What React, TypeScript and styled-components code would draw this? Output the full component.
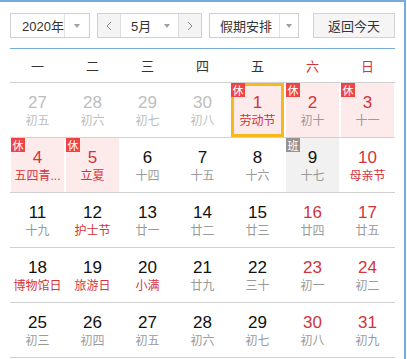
import React from "react";
import styled, { createGlobalStyle } from "styled-components";

const GlobalStyle = createGlobalStyle`
    html, body {
        margin: 0;
        padding: 0;
        background: #fff;
    }
    body {
        font-family: "Liberation Sans", "Noto Sans CJK SC", sans-serif;
    }
`;

interface DayInfo {
    day: number;
    lunar: string;
    faded?: boolean;
    red?: boolean;
    festival?: boolean;
    mark?: "rest" | "work";
    selected?: boolean;
}

const days: DayInfo[] = [
    { day: 27, lunar: "初五", faded: true },
    { day: 28, lunar: "初六", faded: true },
    { day: 29, lunar: "初七", faded: true },
    { day: 30, lunar: "初八", faded: true },
    { day: 1, lunar: "劳动节", red: true, festival: true, mark: "rest", selected: true },
    { day: 2, lunar: "初十", red: true, mark: "rest" },
    { day: 3, lunar: "十一", red: true, mark: "rest" },

    // 五四青年节 is shown shortened, as the widget does
    { day: 4, lunar: "五四青...", red: true, festival: true, mark: "rest" },
    { day: 5, lunar: "立夏", red: true, festival: true, mark: "rest" },
    { day: 6, lunar: "十四" },
    { day: 7, lunar: "十五" },
    { day: 8, lunar: "十六" },
    { day: 9, lunar: "十七", mark: "work" },
    { day: 10, lunar: "母亲节", red: true, festival: true },

    { day: 11, lunar: "十九" },
    { day: 12, lunar: "护士节", festival: true },
    { day: 13, lunar: "廿一" },
    { day: 14, lunar: "廿二" },
    { day: 15, lunar: "廿三" },
    { day: 16, lunar: "廿四", red: true },
    { day: 17, lunar: "廿五", red: true },

    { day: 18, lunar: "博物馆日", festival: true },
    { day: 19, lunar: "旅游日", festival: true },
    { day: 20, lunar: "小满", festival: true },
    { day: 21, lunar: "廿九" },
    { day: 22, lunar: "三十" },
    { day: 23, lunar: "初一", red: true },
    { day: 24, lunar: "初二", red: true },

    { day: 25, lunar: "初三" },
    { day: 26, lunar: "初四" },
    { day: 27, lunar: "初五" },
    { day: 28, lunar: "初六" },
    { day: 29, lunar: "初七" },
    { day: 30, lunar: "初八", red: true },
    { day: 31, lunar: "初九", red: true },
];

const weekdays = ["一", "二", "三", "四", "五", "六", "日"];

const RED = "#d2343c";
const BLUE = "#78abdc";

// 外框
const Frame = styled.div`
    box-sizing: border-box;
    width: 406px;
    height: 359px;
    border-top: 2px solid ${BLUE};
    border-right: 2px solid ${BLUE};
    padding: 11px 9px 0 10px;
    overflow: hidden;
`;

const Toolbar = styled.div`
    display: flex;
    align-items: center;
    height: 25px;
    padding-bottom: 10px;
    border-bottom: 1px solid ${BLUE};
`;

const Select = styled.div<{ $width: number; $gap?: number }>`
    box-sizing: border-box;
    display: flex;
    width: ${({ $width }) => $width}px;
    height: 25px;
    margin-right: ${({ $gap }) => $gap ?? 7}px;
    border: 1px solid #cfcfcf;
    background: #fff;
`;

const SelectText = styled.span<{ $pad?: number }>`
    flex: 1;
    display: flex;
    align-items: center;
    padding-left: ${({ $pad }) => $pad ?? 11}px;
    font-size: 13px;
    color: #333;
`;

const ArrowBox = styled.span<{ $divided?: boolean; $width?: number }>`
    width: ${({ $width }) => $width ?? 24}px;
    display: flex;
    align-items: center;
    justify-content: center;
    border-left: ${({ $divided }) => ($divided ? "1px solid #e2e2e2" : "none")};

    &::after {
        content: "";
        border-left: 3px solid transparent;
        border-right: 3px solid transparent;
        border-top: 4px solid #a0a0a0;
    }
`;

const StepButton = styled.span<{ $side: "left" | "right" }>`
    width: 22px;
    display: flex;
    align-items: center;
    justify-content: center;
    background: #f4f4f4;
    ${({ $side }) => ($side === "left" ? "border-right" : "border-left")}: 1px solid #dcdcdc;
`;

const TodayButton = styled.button`
    box-sizing: border-box;
    width: 82px;
    height: 25px;
    margin-left: auto;
    border: 1px solid #d2d2d2;
    background: #f5f5f5;
    font-family: "Liberation Sans", "Noto Sans CJK SC", sans-serif;
    font-size: 13px;
    color: #333;
    padding: 0;
`;

const Week = styled.div`
    display: grid;
    grid-template-columns: repeat(7, 55px);
    height: 33px;
    border-bottom: 1px solid #d0d0d0;
`;

const WeekName = styled.span<{ $weekend?: boolean }>`
    display: flex;
    align-items: center;
    justify-content: center;
    font-family: "Noto Sans CJK SC", sans-serif;
    font-size: 13px;
    color: ${({ $weekend }) => ($weekend ? RED : "#333")};
`;

const Row = styled.div`
    display: grid;
    grid-template-columns: repeat(7, 55px);
    height: 54px;
    border-bottom: 1px solid #d0d0d0;
`;

const Cell = styled.div<{ $bg: string; $selected?: boolean }>`
    position: relative;
    margin: 0 1px;
    background: ${({ $bg }) => $bg};
    box-shadow: ${({ $selected }) => ($selected ? "inset 0 0 0 3px #f6b81a" : "none")};
    display: flex;
    flex-direction: column;
    align-items: center;
    padding-top: 10px;
    overflow: hidden;
`;

const DayNum = styled.span<{ $color: string }>`
    font-family: "Liberation Sans", Arial, sans-serif;
    font-size: 17px;
    line-height: 20px;
    color: ${({ $color }) => $color};
`;

const Lunar = styled.span<{ $color: string }>`
    font-family: "Liberation Sans", "Noto Sans CJK SC", sans-serif;
    font-size: 12px;
    line-height: 16px;
    color: ${({ $color }) => $color};
    white-space: nowrap;
`;

const Badge = styled.span<{ $work?: boolean }>`
    position: absolute;
    top: 0;
    left: 0;
    width: 14px;
    height: 14px;
    display: flex;
    align-items: center;
    justify-content: center;
    background: ${({ $work }) => ($work ? "#939393" : "#ee4444")};
    color: #fff;
    font-family: "Noto Sans CJK SC", sans-serif;
    font-size: 11px;
    line-height: 14px;
`;

const Chevron: React.FC<{ dir: "left" | "right" }> = ({ dir }) => (
    <svg width="6" height="10" viewBox="0 0 6 10">
        <polyline
            points={dir === "left" ? "5,1 1,5 5,9" : "1,1 5,5 1,9"}
            fill="none"
            stroke="#8a8a8a"
            strokeWidth="1"
        />
    </svg>
);

const DayCell: React.FC<{ info: DayInfo }> = ({ info }) => {
    let bg = "transparent";
    if (info.mark === "rest") bg = "#fdeaea";
    if (info.mark === "work") bg = "#f1f1f1";

    const numColor = info.faded ? "#bdbdbd" : info.red ? RED : "#111";
    const lunarColor = info.faded ? "#bdbdbd" : info.festival ? RED : "#9a9a9a";

    return (
        <Cell $bg={bg} $selected={info.selected}>
            {info.mark && <Badge $work={info.mark === "work"}>{info.mark === "work" ? "班" : "休"}</Badge>}
            <DayNum $color={numColor}>{info.day}</DayNum>
            <Lunar $color={lunarColor}>{info.lunar}</Lunar>
        </Cell>
    );
};

const App: React.FC = () => {
    const rows: DayInfo[][] = [];
    for (let i = 0; i < days.length; i += 7) rows.push(days.slice(i, i + 7));

    return (
        <>
            <GlobalStyle />
            <Frame>
                <Toolbar>
                    <Select $width={80}>
                        <SelectText>2020年</SelectText>
                        <ArrowBox $divided />
                    </Select>
                    <Select $width={105}>
                        <StepButton $side="left"><Chevron dir="left" /></StepButton>
                        <SelectText $pad={10}>5月</SelectText>
                        <ArrowBox $width={22} />
                        <StepButton $side="right"><Chevron dir="right" /></StepButton>
                    </Select>
                    <Select $width={90} $gap={0}>
                        <SelectText $pad={10}>假期安排</SelectText>
                        <ArrowBox $divided $width={18} />
                    </Select>
                    <TodayButton>返回今天</TodayButton>
                </Toolbar>
                <Week>
                    {weekdays.map((w, i) => (
                        <WeekName key={w} $weekend={i >= 5}>{w}</WeekName>
                    ))}
                </Week>
                {rows.map((row, r) => (
                    <Row key={r}>
                        {row.map((d, c) => (
                            <DayCell key={c} info={d} />
                        ))}
                    </Row>
                ))}
            </Frame>
        </>
    );
};

export default App;
